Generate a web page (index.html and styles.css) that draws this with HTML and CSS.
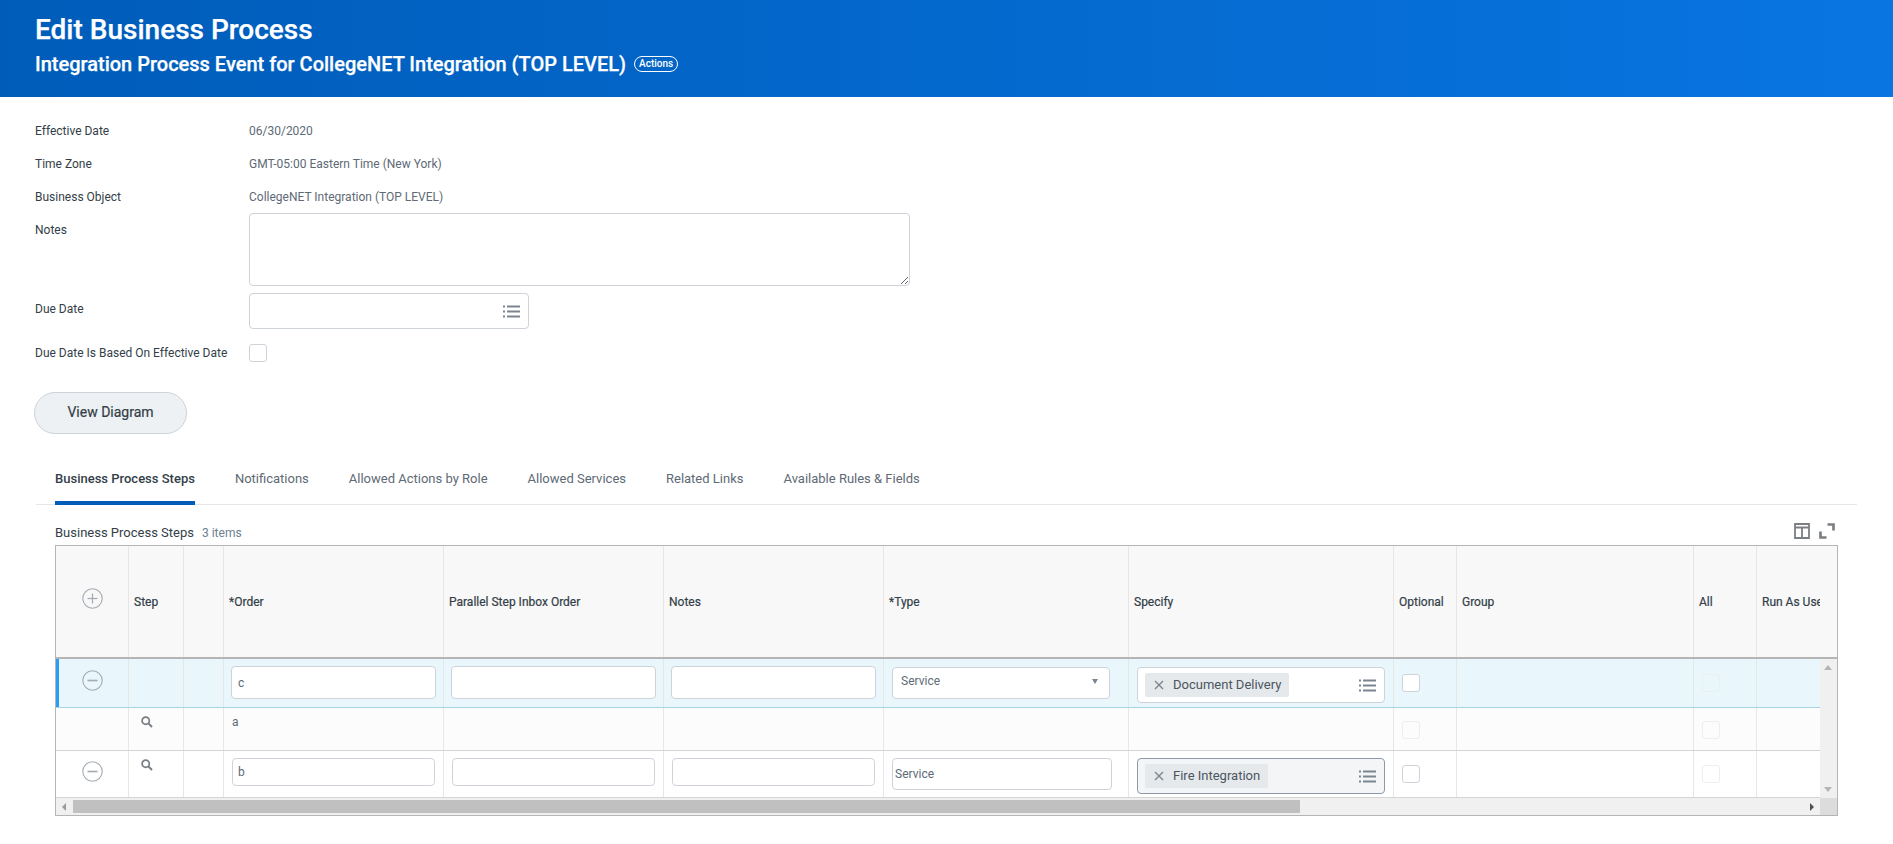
FILE: index.html
```html
<!DOCTYPE html>
<html lang="en">
<head>
<meta charset="utf-8">
<title>Edit Business Process</title>
<link rel="stylesheet" href="styles.css">
</head>
<body>
<svg class="defs" width="0" height="0" aria-hidden="true">
  <symbol id="list" viewBox="0 0 17 13">
    <rect x="0" y="0.5" width="2" height="2"/><rect x="4" y="0.5" width="13" height="2"/>
    <rect x="0" y="5.5" width="2" height="2"/><rect x="4" y="5.5" width="13" height="2"/>
    <rect x="0" y="10.5" width="2" height="2"/><rect x="4" y="10.5" width="13" height="2"/>
  </symbol>
  <symbol id="minus" viewBox="0 0 21 21">
    <circle cx="10.5" cy="10.5" r="9.7" fill="none" stroke="#a3aab1" stroke-width="1.1"/>
    <rect x="5.5" y="9.7" width="10" height="1.6" fill="#a3aab1"/>
  </symbol>
  <symbol id="plus" viewBox="0 0 21 21">
    <circle cx="10.5" cy="10.5" r="9.7" fill="none" stroke="#a3aab1" stroke-width="1.1"/>
    <rect x="5.5" y="9.9" width="10" height="1.2" fill="#a3aab1"/>
    <rect x="9.9" y="5.5" width="1.2" height="10" fill="#a3aab1"/>
  </symbol>
  <symbol id="search" viewBox="0 0 12 12">
    <circle cx="4.7" cy="4.7" r="3.6" fill="none" stroke="#777d83" stroke-width="1.7"/>
    <path d="M7.4 7.4L11 11" stroke="#777d83" stroke-width="2" fill="none"/>
  </symbol>
  <symbol id="cross" viewBox="0 0 10 10">
    <path d="M1 1L9 9M9 1L1 9" stroke="#7b858f" stroke-width="1.4" fill="none"/>
  </symbol>
</svg>

<header class="banner">
  <h1 class="banner-title">Edit Business Process</h1>
  <div class="banner-sub">
    <h2 class="banner-subtitle">Integration Process Event for CollegeNET Integration (TOP LEVEL)</h2>
    <span class="actions-pill">Actions</span>
  </div>
</header>

<main class="content">
  <section class="form">
    <div class="form-row r33"><div class="form-label">Effective Date</div><div class="form-value">06/30/2020</div></div>
    <div class="form-row r33"><div class="form-label">Time Zone</div><div class="form-value">GMT-05:00 Eastern Time (New York)</div></div>
    <div class="form-row r32"><div class="form-label">Business Object</div><div class="form-value">CollegeNET Integration (TOP LEVEL)</div></div>
    <div class="form-row notes-row"><div class="form-label notes-label">Notes</div><textarea class="notes-area"></textarea></div>
    <div class="form-row due-row"><div class="form-label">Due Date</div>
      <div class="due-input"><svg class="list-icon"><use href="#list"/></svg></div>
    </div>
    <div class="form-row check-row"><div class="form-label">Due Date Is Based On Effective Date</div><span class="check"></span></div>
  </section>

  <button class="diagram-btn" type="button">View Diagram</button>

  <nav class="tabs">
    <a class="tab tab-active">Business Process Steps</a>
    <a class="tab">Notifications</a>
    <a class="tab">Allowed Actions by Role</a>
    <a class="tab">Allowed Services</a>
    <a class="tab">Related Links</a>
    <a class="tab">Available Rules &amp; Fields</a>
  </nav>

  <div class="grid-title">
    <div class="grid-title-text"><span class="grid-name">Business Process Steps</span><span class="grid-count">3 items</span></div>
    <div class="grid-tools">
      <svg class="tool" viewBox="0 0 16 16"><path d="M1 1H15V15H1ZM1 4.5H15M8 4.5V15" fill="none" stroke="#7b7f83" stroke-width="1.8"/></svg>
      <svg class="tool" viewBox="0 0 16 16"><path d="M8.5 1.5H14.5V7.5M1.5 8.5V14.5H7.5" fill="none" stroke="#7b7f83" stroke-width="2.7"/></svg>
    </div>
  </div>

  <div class="grid-frame">
    <div class="grid-head">
      <div class="head-row cols">
        <div class="hcell hcell-icon"><svg class="circle-icon"><use href="#plus"/></svg></div>
        <div class="hcell">Step</div>
        <div class="hcell"></div>
        <div class="hcell">*Order</div>
        <div class="hcell">Parallel Step Inbox Order</div>
        <div class="hcell">Notes</div>
        <div class="hcell">*Type</div>
        <div class="hcell">Specify</div>
        <div class="hcell">Optional</div>
        <div class="hcell">Group</div>
        <div class="hcell">All</div>
        <div class="hcell hcell-clip">Run As User</div>
      </div>
    </div>
    <div class="grid-middle">
      <div class="grid-body">
        <div class="row cols row-selected">
          <div class="cell cell-icon"><svg class="circle-icon"><use href="#minus"/></svg></div>
          <div class="cell"></div>
          <div class="cell"></div>
          <div class="cell cell-in1"><input class="inp inp-tall" value="c"></div>
          <div class="cell cell-in1"><input class="inp inp-tall"></div>
          <div class="cell cell-in1"><input class="inp inp-tall"></div>
          <div class="cell cell-type1"><div class="select">Service<span class="caret"></span></div></div>
          <div class="cell cell-spec1"><div class="tagbox"><span class="tag"><svg class="cross"><use href="#cross"/></svg>Document Delivery</span><svg class="list-icon"><use href="#list"/></svg></div></div>
          <div class="cell cell-chk1"><span class="check check-table"></span></div>
          <div class="cell"></div>
          <div class="cell cell-chk2"><span class="check check-faint"></span></div>
          <div class="cell"></div>
        </div>
        <div class="row cols row-plain">
          <div class="cell"></div>
          <div class="cell cell-search"><svg class="search"><use href="#search"/></svg></div>
          <div class="cell"></div>
          <div class="cell cell-text">a</div>
          <div class="cell"></div>
          <div class="cell"></div>
          <div class="cell"></div>
          <div class="cell"></div>
          <div class="cell cell-chk1 cell-chk-r2"><span class="check check-faint"></span></div>
          <div class="cell"></div>
          <div class="cell cell-chk2 cell-chk-r2"><span class="check check-faint"></span></div>
          <div class="cell"></div>
        </div>
        <div class="row cols row-last">
          <div class="cell cell-icon cell-icon-low"><svg class="circle-icon"><use href="#minus"/></svg></div>
          <div class="cell cell-search cell-search-r3"><svg class="search"><use href="#search"/></svg></div>
          <div class="cell"></div>
          <div class="cell cell-in3"><input class="inp inp-short inp-b" value="b"></div>
          <div class="cell cell-in3"><input class="inp inp-short"></div>
          <div class="cell cell-in3"><input class="inp inp-short"></div>
          <div class="cell cell-type3"><input class="inp inp-type" value="Service"></div>
          <div class="cell cell-spec3"><div class="tagbox tagbox-focus"><span class="tag"><svg class="cross"><use href="#cross"/></svg>Fire Integration</span><svg class="list-icon"><use href="#list"/></svg></div></div>
          <div class="cell cell-chk1 cell-chk-r3"><span class="check check-table"></span></div>
          <div class="cell"></div>
          <div class="cell cell-chk2 cell-chk-r3"><span class="check check-faint"></span></div>
          <div class="cell"></div>
        </div>
      </div>
      <div class="vscroll"><span class="arrow-up"></span><span class="arrow-down"></span></div>
    </div>
    <div class="hscroll">
      <span class="arrow-left"></span>
      <span class="thumb"></span>
      <span class="arrow-right"></span>
      <span class="corner"></span>
    </div>
  </div>
</main>
</body>
</html>
```
FILE: styles.css
```css
* { box-sizing: border-box; }
html, body { margin: 0; padding: 0; }
body {
  width: 1893px;
  height: 844px;
  overflow: hidden;
  background: #fff;
  font-family: Roboto, "Liberation Sans", sans-serif;
  font-size: 12px;
  color: #333e48;
}
.defs { position: absolute; }

.banner {
  height: 97px;
  padding: 14px 35px 0;
  color: #fff;
  background: linear-gradient(90deg, #005cb9 0%, #0875e1 100%);
}
.banner-title { margin: 0; font-size: 28px; line-height: 32px; font-weight: 500; -webkit-text-stroke: 0.25px #fff; }
.banner-sub { display: flex; align-items: center; margin-top: 2px; height: 32px; }
.banner-subtitle { margin: 0; font-size: 20px; line-height: 30px; font-weight: 500; -webkit-text-stroke: 0.25px #fff; }
.actions-pill {
  margin-left: 8px;
  padding: 0 4px;
  height: 16px;
  line-height: 14px;
  font-size: 10px;
  font-weight: 500;
  border: 1px solid #fff;
  border-radius: 8px;
}

.content { padding: 18px 0 0 35px; }
.form-row { display: flex; }
.form-label { width: 214px; line-height: 33px; color: #333e48; flex: none; }
.form-value { line-height: 33px; color: #5e6a75; }
.r33 { height: 33px; }
.r32 { height: 32px; }
.notes-row { height: 73px; margin-bottom: 7px; }
.notes-label { padding-top: 1px; }
.notes-area {
  display: block;
  width: 661px;
  height: 73px;
  margin: 0;
  border: 1px solid #ced3d9;
  border-radius: 4px;
  background: #fff;
  outline: none;
}
.due-row { height: 36px; margin-bottom: 15px; }
.due-input {
  display: flex;
  align-items: center;
  justify-content: flex-end;
  width: 280px;
  height: 36px;
  padding-right: 8px;
  border: 1px solid #ced3d9;
  border-radius: 4px;
}
.list-icon { width: 17px; height: 13px; fill: #7b858f; flex: none; }
.check-row { height: 18px; }
.check-row .form-label { line-height: 18px; }
.check {
  display: block;
  width: 18px;
  height: 18px;
  background: #fff;
  border: 1px solid #ced3d9;
  border-radius: 3px;
}

.diagram-btn {
  display: block;
  width: 153px;
  height: 42px;
  margin: 30px 0 0 -1px;
  padding: 0 0 2px;
  font: 400 14px Roboto, "Liberation Sans", sans-serif;
  color: #333e48;
  -webkit-text-stroke: 0.2px #333e48;
  background: #eef1f3;
  border: 1px solid #ced3d9;
  border-radius: 21px;
}

.tabs {
  display: flex;
  gap: 40px;
  width: 1821px;
  height: 66px;
  margin: 5px 0 0 1px;
  padding: 0 0 0 19px;
  border-bottom: 1px solid #e4e7ea;
}
.tab {
  height: 66px;
  padding-top: 32px;
  font-size: 13px;
  line-height: 16px;
  color: #5e6a75;
}
.tab-active {
  font-weight: 500;
  color: #333e48;
  border-bottom: 4px solid #005cb9;
}

.grid-title {
  display: flex;
  justify-content: space-between;
  width: 1780px;
  height: 40px;
  margin-left: 20px;
}
.grid-title-text { padding-top: 20px; line-height: 16px; }
.grid-name { font-size: 13px; color: #333e48; }
.grid-count { margin-left: 8px; color: #6b8091; }
.grid-tools { display: flex; gap: 9px; padding-top: 18px; }
.tool { width: 16px; height: 16px; }

.grid-frame {
  width: 1783px;
  margin-left: 20px;
  border: 1px solid #b5b5b5;
  background: #fff;
}
.cols {
  display: grid;
  grid-template-columns: 73px 55px 40px 220px 220px 220px 245px 265px 63px 237px 63px 63px;
}
.grid-head { background: #f8f8f8; border-bottom: 2px solid #b5b5b5; }
.head-row { width: 1764px; height: 111px; overflow: hidden; }
.hcell {
  display: flex;
  align-items: center;
  padding-left: 5px;
  white-space: nowrap;
  overflow: hidden;
  color: #333e48;
  font-size: 12px;
  font-weight: 400;
  -webkit-text-stroke: 0.2px #333e48;
  border-right: 1px solid #e6e6e6;
}
.hcell-icon { justify-content: center; padding-left: 0; padding-bottom: 7px; }
.hcell-clip { border-right: none; }
.circle-icon { width: 21px; height: 21px; }

.grid-middle { display: flex; }
.grid-body { width: 1764px; }
.vscroll {
  position: relative;
  width: 17px;
  background: #f0f0f0;
}
.row { height: 48px; }
.row-selected { height: 49px; background: #e9f7fd; border-bottom: 1px solid #a9d3e6; box-shadow: inset 3px 0 0 #2a9df4; }
.row-plain { height: 43px; background: #fcfcfc; border-bottom: 1px solid #d4d4d4; }
.row-last { height: 47px; border-bottom: 1px solid #d4d4d4; }
.cell { border-right: 1px solid #e6e6e6; min-width: 0; }
.cell:last-child { border-right: none; }
.cell-icon { display: flex; justify-content: center; padding-top: 11px; }
.cell-icon-low { padding-top: 10px; }
.cell-search { padding: 8px 0 0 12px; }
.cell-search-r3 { padding-top: 8px; }
.search { display: block; width: 12px; height: 12px; }
.cell-text { padding: 6px 0 0 8px; line-height: 16px; color: #5e6a75; }

.inp {
  display: block;
  padding: 0 0 0 6px;
  font: 12px Roboto, "Liberation Sans", sans-serif;
  color: #5e6a75;
  background: #fff;
  border: 1px solid #ced3d9;
  border-radius: 4px;
  outline: none;
}
.cell-in1 { padding: 7px 0 0 7px; }
.inp-tall { width: 205px; height: 33px; }
.cell-in3 { padding: 7px 0 0 8px; }
.inp-short { width: 203px; height: 28px; }
.inp-b { padding-left: 5px; }
.cell-type1 { padding: 8px 0 0 8px; }
.select {
  position: relative;
  width: 218px;
  height: 32px;
  padding-left: 8px;
  line-height: 27px;
  color: #5e6a75;
  background: #fff;
  border: 1px solid #ced3d9;
  border-radius: 4px;
}
.caret {
  position: absolute;
  right: 11px;
  top: 11px;
  border-left: 3.5px solid transparent;
  border-right: 3.5px solid transparent;
  border-top: 5px solid #7b858f;
}
.cell-type3 { padding: 7px 0 0 8px; }
.inp-type { width: 220px; height: 32px; padding-left: 2px; }
.cell-spec1 { padding: 8px 0 0 8px; }
.cell-spec3 { padding: 7px 0 0 8px; }
.tagbox {
  display: flex;
  align-items: center;
  justify-content: space-between;
  width: 248px;
  height: 36px;
  padding: 0 8px 0 7px;
  background: #fff;
  border: 1px solid #ced3d9;
  border-radius: 4px;
}
.tagbox-focus { background: #f3f5f7; border-color: #8d99a6; }
.tag {
  display: flex;
  align-items: center;
  height: 24px;
  padding: 0 8px 2px 9px;
  font-size: 13px;
  color: #4a5560;
  background: #e6e9ec;
  border-radius: 2px;
}
.cross { width: 10px; height: 10px; margin: 2px 9px 0 0; }
.cell-chk1, .cell-chk2 { padding: 15px 0 0 8px; }
.cell-chk-r2 { padding-top: 13px; }
.cell-chk-r3 { padding-top: 14px; }
.check-table { border-color: #ced3d9; }
.check-faint { background: transparent; border-color: #eceef0; }

.arrow-up, .arrow-down {
  position: absolute;
  left: 4px;
  border-left: 4px solid transparent;
  border-right: 4px solid transparent;
}
.arrow-up { top: 6px; border-bottom: 5px solid #b4b4b4; }
.arrow-down { bottom: 6px; border-top: 5px solid #b4b4b4; }

.hscroll {
  display: flex;
  align-items: center;
  height: 17px;
  background: #f0f0f0;
}
.arrow-left {
  margin-left: 6px;
  border-top: 4px solid transparent;
  border-bottom: 4px solid transparent;
  border-right: 4px solid #9a9a9a;
}
.thumb {
  width: 1227px;
  height: 13px;
  margin-left: 7px;
  background: #c0c0c0;
}
.arrow-right {
  margin-left: 510px;
  border-top: 4px solid transparent;
  border-bottom: 4px solid transparent;
  border-left: 4px solid #505050;
}
.corner {
  width: 17px;
  height: 17px;
  margin-left: auto;
  background: #dcdcdc;
}
```
